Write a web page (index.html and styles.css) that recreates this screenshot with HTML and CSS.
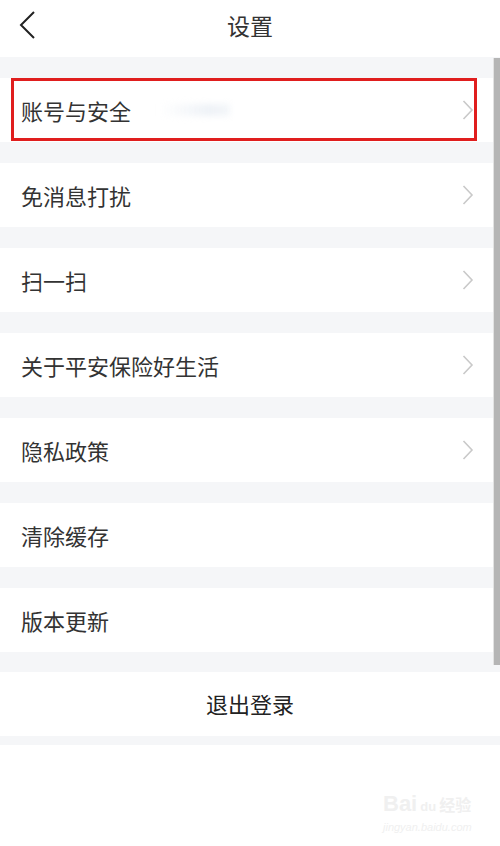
FILE: index.html
```html
<!DOCTYPE html>
<html lang="zh-CN">
<head>
  <meta charset="UTF-8">
  <title>设置</title>
  <link rel="stylesheet" href="styles.css">
</head>
<body>
  <div class="page">
    <header class="topbar">
      <a class="back" href="#">
        <svg width="18" height="30" viewBox="0 0 18 30"><path d="M16 2 L3 15 L16 28" fill="none" stroke="#222" stroke-width="2"/></svg>
      </a>
      <h1 class="title">设置</h1>
      <span></span>
    </header>

    <div class="list">
      <a class="row marked" href="#">
        <span class="label">账号与安全</span>
        <span class="hidden-num"></span>
        <svg class="arrow" width="12" height="20" viewBox="0 0 12 20"><path d="M1.5 1 L10 10 L1.5 19" fill="none" stroke="#c9c9c9" stroke-width="1.6"/></svg>
      </a>
      <a class="row" href="#">
        <span class="label">免消息打扰</span>
        <svg class="arrow" width="12" height="20" viewBox="0 0 12 20"><path d="M1.5 1 L10 10 L1.5 19" fill="none" stroke="#c9c9c9" stroke-width="1.6"/></svg>
      </a>
      <a class="row" href="#">
        <span class="label">扫一扫</span>
        <svg class="arrow" width="12" height="20" viewBox="0 0 12 20"><path d="M1.5 1 L10 10 L1.5 19" fill="none" stroke="#c9c9c9" stroke-width="1.6"/></svg>
      </a>
      <a class="row" href="#">
        <span class="label">关于平安保险好生活</span>
        <svg class="arrow" width="12" height="20" viewBox="0 0 12 20"><path d="M1.5 1 L10 10 L1.5 19" fill="none" stroke="#c9c9c9" stroke-width="1.6"/></svg>
      </a>
      <a class="row" href="#">
        <span class="label">隐私政策</span>
        <svg class="arrow" width="12" height="20" viewBox="0 0 12 20"><path d="M1.5 1 L10 10 L1.5 19" fill="none" stroke="#c9c9c9" stroke-width="1.6"/></svg>
      </a>
      <a class="row" href="#">
        <span class="label">清除缓存</span>
      </a>
      <a class="row" href="#">
        <span class="label">版本更新</span>
      </a>
      <a class="row logout" href="#">退出登录</a>
      <div class="tail"></div>
    </div>

    <div class="scrollbar"></div>

    <div class="watermark">
      <div class="wm-logo">Bai<span class="wm-du">du</span><span class="wm-cn">经验</span></div>
      <div class="wm-url">jingyan.baidu.com</div>
    </div>
  </div>
</body>
</html>
```

FILE: styles.css
```css
body {
  margin: 0;
  background: #fff;
  font-family: "Noto Sans CJK SC", "Noto Sans", sans-serif;
  color: #333;
}

.page {
  position: relative;
  width: 500px;
  height: 846px;
  overflow: hidden;
}

.topbar {
  display: grid;
  grid-template-columns: 1fr auto 1fr;
  align-items: center;
  height: 49px;
  padding-bottom: 8px;
  background: #fff;
}

.back {
  display: flex;
  padding-left: 18px;
  padding-top: 1px;
}

.title {
  margin: 0;
  font-size: 23px;
  font-weight: normal;
  color: #333;
}

.list {
  display: flex;
  flex-direction: column;
  gap: 21px;
  padding-top: 21px;
  background: #f5f6f8;
}

.row {
  position: relative;
  display: flex;
  align-items: center;
  height: 64px;
  padding: 0 26px 0 21px;
  background: #fff;
  text-decoration: none;
  color: #333;
  font-size: 22px;
}

.label {
  flex: 1 1 auto;
}

.hidden-num {
  position: absolute;
  left: 160px;
  top: 26px;
  width: 70px;
  height: 12px;
  background: linear-gradient(to right, rgba(238, 242, 247, 0), #eef2f7 70%, #f3f6f9);
  filter: blur(3px);
}

.arrow {
  flex: none;
}

.marked::after {
  content: "";
  position: absolute;
  left: 11px;
  right: 23px;
  top: 0;
  bottom: 1px;
  border: 3px solid #e01e1e;
}

.logout {
  justify-content: center;
  height: 61px;
  margin-top: -1px;
  padding: 0 0 3px;
  color: #222;
}

.tail {
  height: 104px;
  margin-top: -12px;
  background: #fff;
}

.scrollbar {
  position: absolute;
  right: 0;
  top: 58px;
  width: 6px;
  height: 607px;
  background: #b5b5b5;
  border-left: 1px solid #e2e2e2;
}

.watermark {
  position: absolute;
  left: 383px;
  top: 792px;
  color: #f0f0f0;
  font-family: "Liberation Sans", sans-serif;
}

.wm-logo {
  font-size: 22px;
  font-weight: bold;
  line-height: 24px;
}

.wm-du {
  font-size: 13px;
  margin-left: 3px;
}

.wm-cn {
  font-family: "Noto Sans CJK SC", sans-serif;
  font-size: 16px;
  margin-left: 3px;
}

.wm-url {
  font-size: 11px;
  font-style: italic;
  line-height: 16px;
}
```
